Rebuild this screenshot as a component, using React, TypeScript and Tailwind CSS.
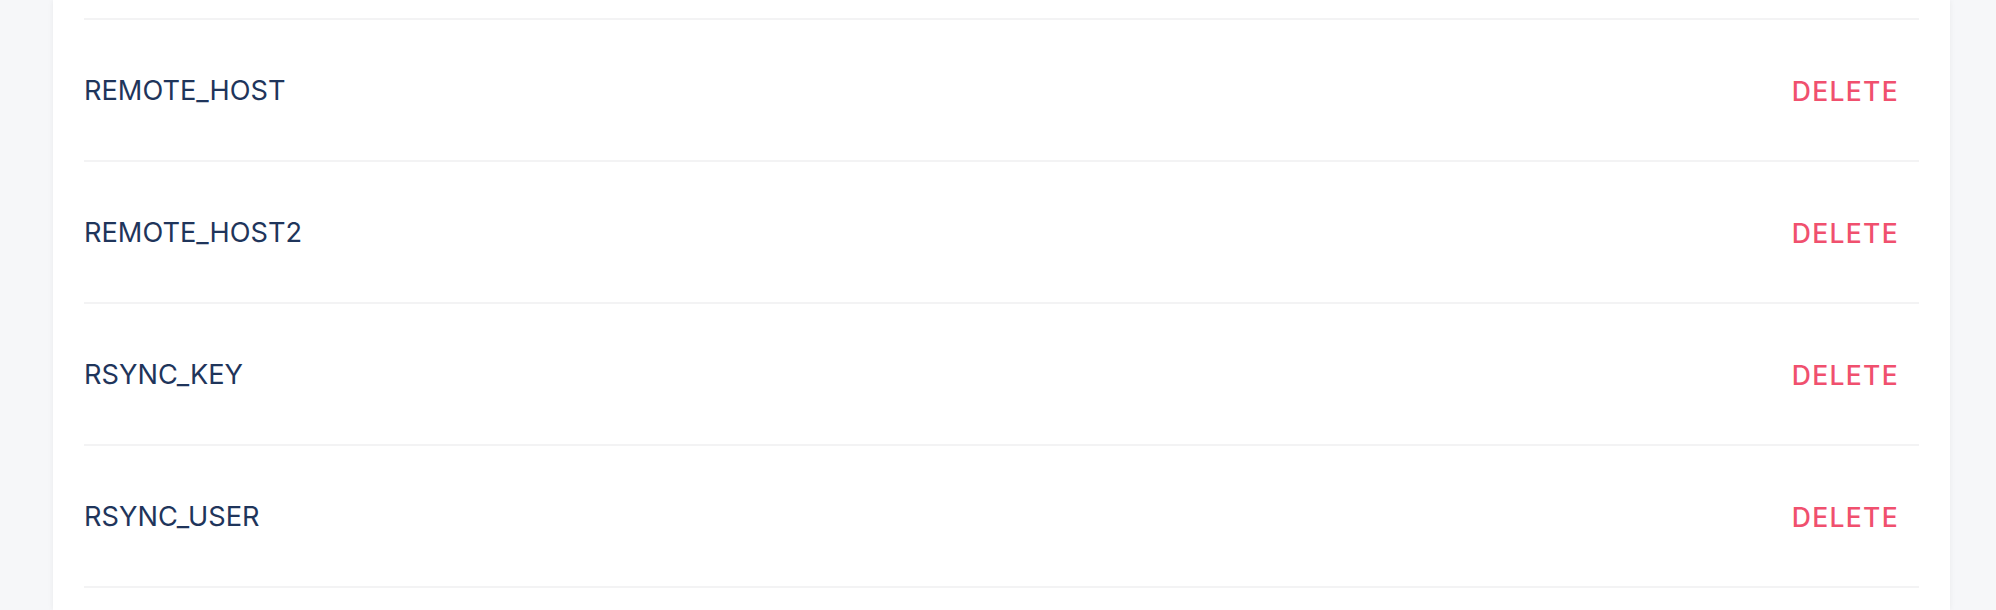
import React from "react";

const secrets = ["REMOTE_HOST", "REMOTE_HOST2", "RSYNC_KEY", "RSYNC_USER"];

export default function App() {
  return (
    <div
      className="h-[610px] overflow-hidden bg-[#f6f7f9] pl-[53px] pr-[46px]"
      style={{ fontFamily: "Inter, 'Noto Sans', sans-serif" }}
    >
      <div className="h-full bg-white px-[31px] pt-[18px] shadow-[0_0_6px_rgba(0,0,0,0.06)]">
        <hr className="border-0 border-t-2 border-[#f3f3f4]" />
        {secrets.map((name) => (
          <div key={name}>
            <div className="flex h-[140px] items-center justify-between pt-[3px]">
              <span className="text-[27.2px] text-[#1f355b]">{name}</span>
              <button className="mr-[20px] text-[26.5px] font-medium tracking-[0.05em] text-[#f0506e]">
                DELETE
              </button>
            </div>
            <hr className="border-0 border-t-2 border-[#f3f3f4]" />
          </div>
        ))}
      </div>
    </div>
  );
}
